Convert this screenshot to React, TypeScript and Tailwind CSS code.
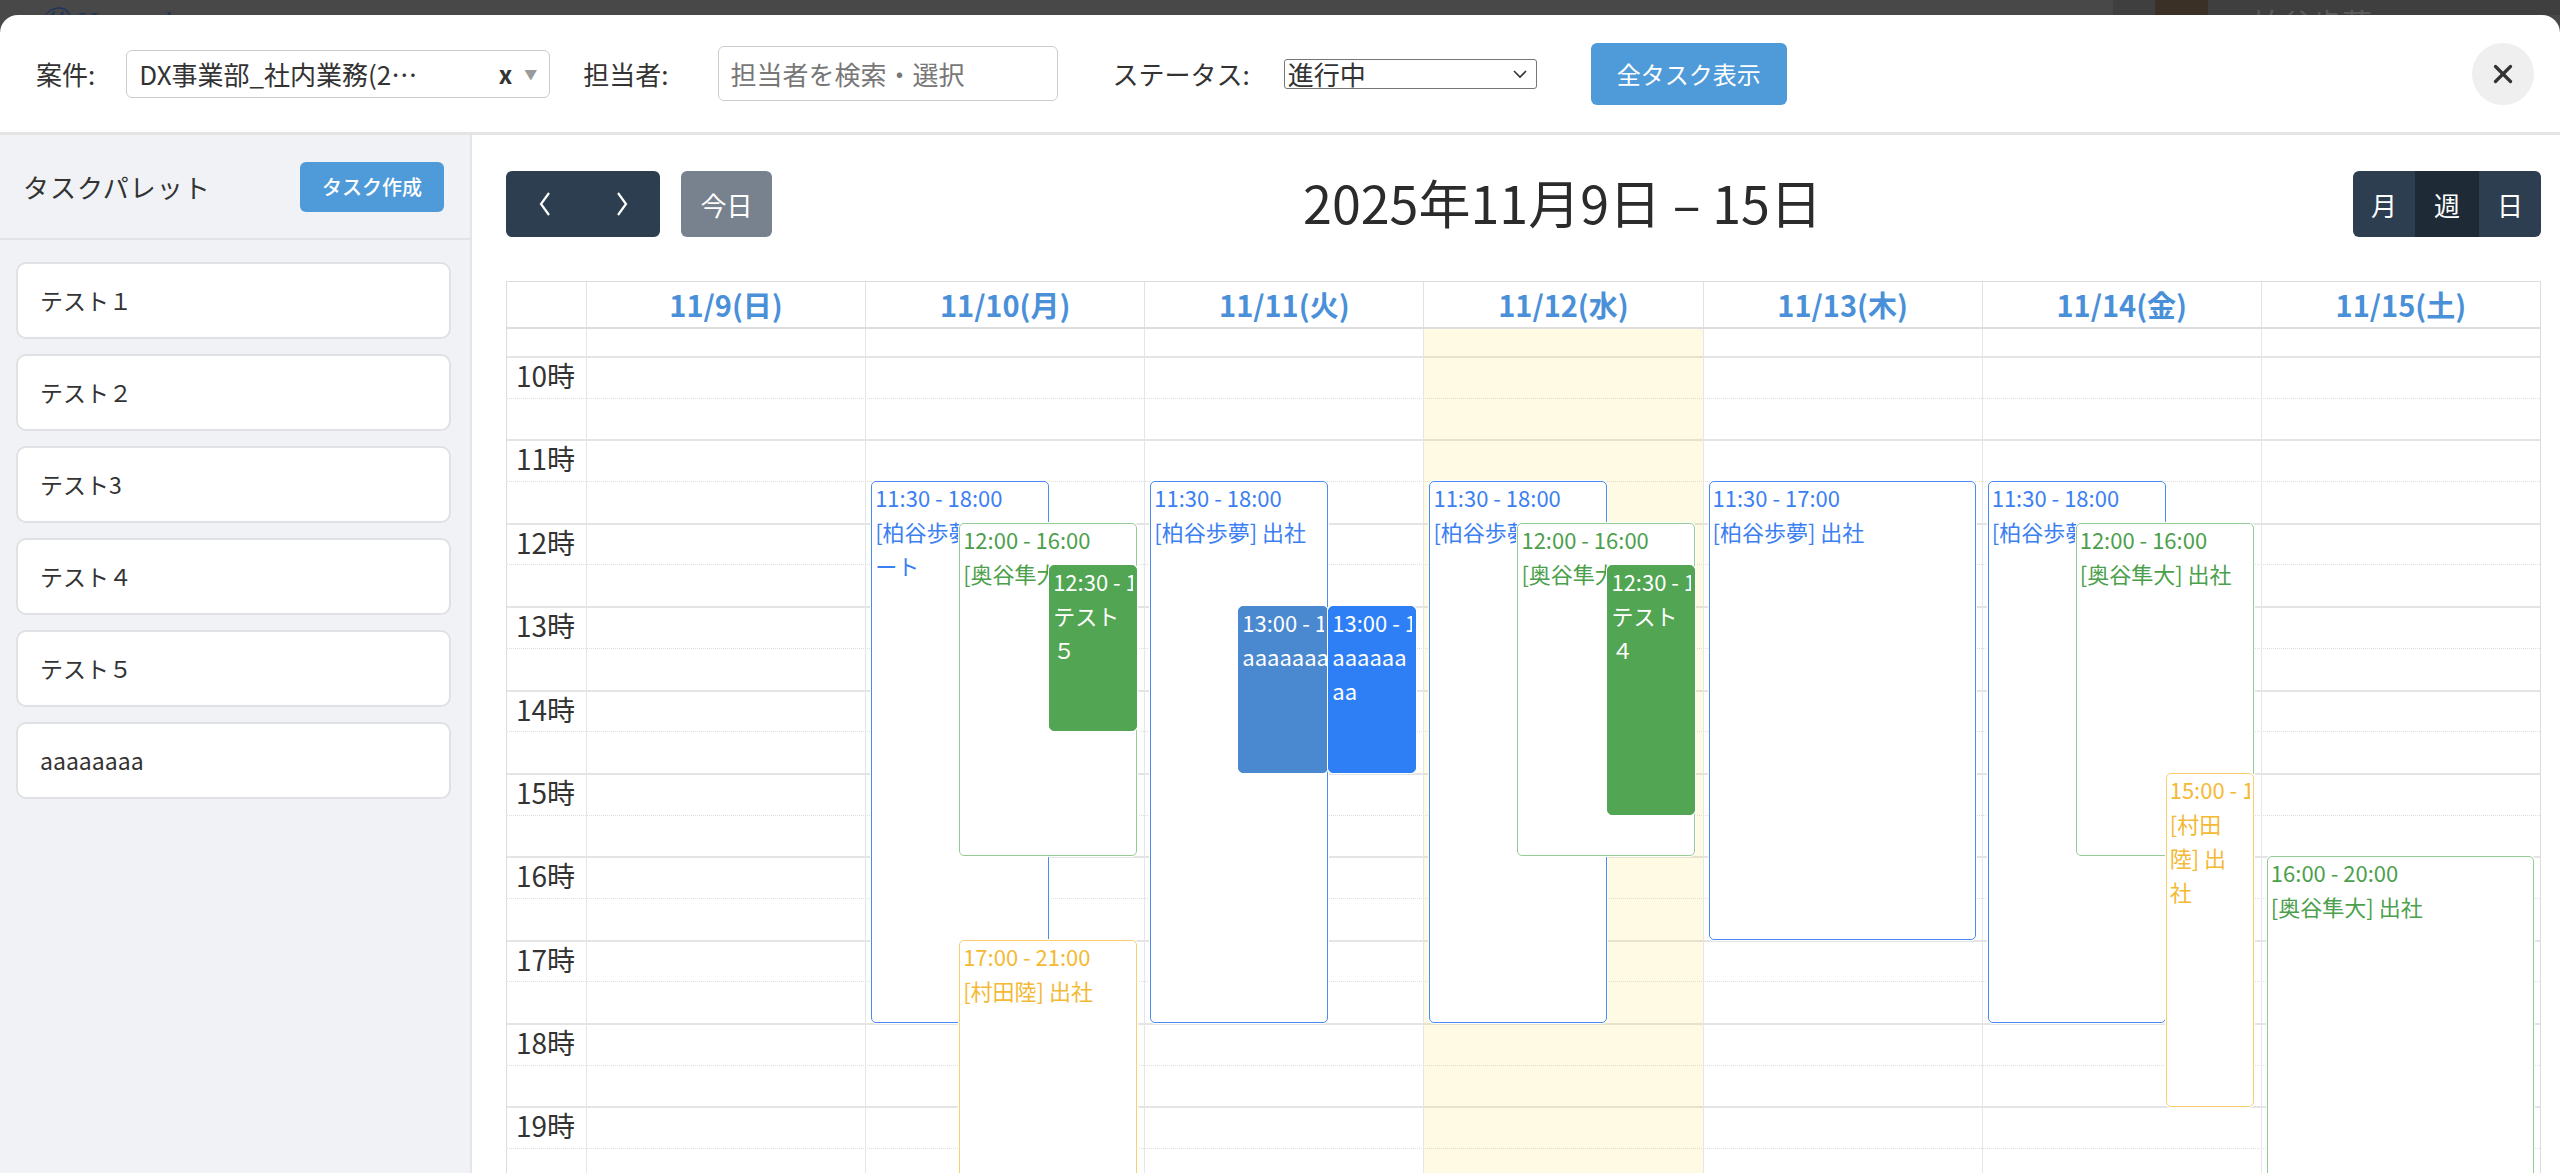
import React from "react";
import { X } from "lucide-react";

type Kind = "blueO" | "greenO" | "yellowO" | "greenF" | "blueF" | "blueL";

interface Ev {
  s: number;
  e: number;
  l: number;
  r: number;
  kind: Kind;
  time: string;
  title: string;
  nowrap?: boolean;
}

const HOUR = 83.4;
const TOP0 = 27; // 10:00 line offset inside the scrolled body
const y = (h: number) => TOP0 + (h - 10) * HOUR;

const days = ["11/9(日)", "11/10(月)", "11/11(火)", "11/12(水)", "11/13(木)", "11/14(金)", "11/15(土)"];
const hours = [10, 11, 12, 13, 14, 15, 16, 17, 18, 19, 20];
const palette = ["テスト１", "テスト２", "テスト3", "テスト４", "テスト５", "aaaaaaaa"];

const kindClass: Record<Kind, string> = {
  blueO: "bg-white border-[#4a8af4] text-[#3b7ff2]",
  greenO: "bg-white border-[#94cc94] text-[#4c9f4c]",
  yellowO: "bg-white border-[#f9d06e] text-[#f4b935]",
  greenF: "bg-[#52a552] border-[#52a552] text-white",
  blueF: "bg-[#2e7ff6] border-[#2e7ff6] text-white",
  blueL: "bg-[#4a88d0] border-[#4a88d0] text-white",
};

const events: Ev[][] = [
  [],
  [
    { s: 11.5, e: 18, l: 5, r: 183, kind: "blueO", time: "11:30 - 18:00", title: "[柏谷歩夢] リモート" },
    { s: 12, e: 16, l: 93, r: 271, kind: "greenO", time: "12:00 - 16:00", title: "[奥谷隼大] 出社" },
    { s: 12.5, e: 14.5, l: 183, r: 271, kind: "greenF", time: "12:30 - 14:30", title: "テスト５" },
    { s: 17, e: 21, l: 93, r: 271, kind: "yellowO", time: "17:00 - 21:00", title: "[村田陸] 出社" },
  ],
  [
    { s: 11.5, e: 18, l: 5, r: 183, kind: "blueO", time: "11:30 - 18:00", title: "[柏谷歩夢] 出社" },
    { s: 13, e: 15, l: 93, r: 183, kind: "blueL", time: "13:00 - 15:00", title: "aaaaaaaa", nowrap: true },
    { s: 13, e: 15, l: 183, r: 271, kind: "blueF", time: "13:00 - 15:00", title: "aaaaaaaa" },
  ],
  [
    { s: 11.5, e: 18, l: 5, r: 183, kind: "blueO", time: "11:30 - 18:00", title: "[柏谷歩夢] 出社" },
    { s: 12, e: 16, l: 93, r: 271, kind: "greenO", time: "12:00 - 16:00", title: "[奥谷隼大] 出社" },
    { s: 12.5, e: 15.5, l: 183, r: 271, kind: "greenF", time: "12:30 - 15:30", title: "テスト４" },
  ],
  [{ s: 11.5, e: 17, l: 5, r: 272, kind: "blueO", time: "11:30 - 17:00", title: "[柏谷歩夢] 出社" }],
  [
    { s: 11.5, e: 18, l: 5, r: 183, kind: "blueO", time: "11:30 - 18:00", title: "[柏谷歩夢] 出社" },
    { s: 12, e: 16, l: 93, r: 271, kind: "greenO", time: "12:00 - 16:00", title: "[奥谷隼大] 出社" },
    { s: 15, e: 19, l: 183, r: 271, kind: "yellowO", time: "15:00 - 19:00", title: "[村田陸] 出社" },
  ],
  [{ s: 16, e: 20, l: 5, r: 272, kind: "greenO", time: "16:00 - 20:00", title: "[奥谷隼大] 出社" }],
];

function Chevron({ dir }: { dir: "l" | "r" }) {
  return (
    <svg width="16" height="26" viewBox="0 0 16 26" fill="none" stroke="white" strokeWidth="2.2">
      {dir === "l" ? <polyline points="12,2 4,13 12,24" /> : <polyline points="4,2 12,13 4,24" />}
    </svg>
  );
}

function EventBox({ ev }: { ev: Ev }) {
  return (
    <div
      className={`absolute overflow-hidden rounded-[5px] border-[1.5px] shadow-[0_0_0_1px_#fff] px-[3px] ${kindClass[ev.kind]}`}
      style={{ top: y(ev.s), height: y(ev.e) - y(ev.s), left: ev.l, width: ev.r - ev.l }}
    >
      <div className="whitespace-nowrap overflow-hidden text-[22px] leading-[33px] -mt-[1px]">{ev.time}</div>
      <div className={`pr-[4px] text-[22px] leading-[34px] ${ev.nowrap ? "whitespace-nowrap" : "break-words"}`}>
        {ev.title}
      </div>
    </div>
  );
}

export default function App() {
  return (
    <div className="w-[2560px] h-[1173px] overflow-hidden bg-[#484848] flex flex-col font-['Noto_Sans_CJK_JP','Noto_Sans',sans-serif] text-[#333]">
      {/* backdrop strip */}
      <div className="h-[15px] shrink-0 flex items-start overflow-hidden">
        <div className="ml-[38px] text-[30px] leading-[44px] text-[#22365a] font-['Liberation_Serif',serif] italic">
          ⑪ Hatenabase
        </div>
        <div className="ml-auto w-[447px] h-[15px] bg-[#3f3f3f] flex items-start pl-[42px]">
          <div className="w-[53px] h-[15px] bg-[#3a3026]" />
          <div className="ml-[44px] text-[30px] leading-[44px] text-[#5a5a5a]">柏谷歩夢</div>
        </div>
      </div>

      <div className="flex-1 min-h-0 bg-white rounded-t-[18px] flex flex-col overflow-hidden">
        {/* filter header */}
        <div className="h-[120px] shrink-0 flex items-center border-b-[3px] border-[#e4e4e4] text-[26px]">
          <div className="ml-[36px] flex items-center">
            <span>案件:</span>
            <div className="ml-[31px] w-[424px] h-[48px] border-[1.5px] border-[#cccccc] rounded-[6px] flex items-center pl-[12px] pr-[12px]">
              <span className="flex-1 whitespace-nowrap overflow-hidden">DX事業部_社内業務(2…</span>
              <span className="text-[24px] font-bold text-[#333] mr-[12px]">x</span>
              <span className="text-[13px] text-[#9a9a9a]">▼</span>
            </div>
          </div>
          <div className="ml-[33px] flex items-center">
            <span>担当者:</span>
            <div className="ml-[50px] w-[340px] h-[55px] border-[1.5px] border-[#cccccc] rounded-[6px] flex items-center pl-[11px] text-[#777]">
              担当者を検索・選択
            </div>
          </div>
          <div className="ml-[54px] flex items-center">
            <span>ステータス:</span>
            <div className="ml-[34px] w-[253px] h-[30px] border-[1.5px] border-[#767676] rounded-[3px] flex items-center justify-between pl-[3px] pr-[8px] leading-none">
              <span>進行中</span>
              <svg width="16" height="10" viewBox="0 0 16 10" fill="none" stroke="#333" strokeWidth="1.6">
                <polyline points="2,2 8,8 14,2" />
              </svg>
            </div>
          </div>
          <button className="ml-[54px] w-[196px] h-[62px] bg-[#4f9bd9] rounded-[6px] text-white text-[24px]">
            全タスク表示
          </button>
          <button className="ml-auto mr-[26px] w-[62px] h-[62px] rounded-full bg-[#efefef] flex items-center justify-center">
            <X size={30} strokeWidth={2.6} color="#333" />
          </button>
        </div>

        <div className="flex-1 min-h-0 flex">
          {/* task palette */}
          <div className="w-[472px] shrink-0 bg-[#f0f2f5] border-r-2 border-[#e3e5e9] flex flex-col">
            <div className="h-[105px] shrink-0 flex items-center justify-between pl-[23px] pr-[26px] border-b-2 border-[#e0e3e7]">
              <span className="text-[26px] tracking-[1px]">タスクパレット</span>
              <button className="w-[144px] h-[50px] bg-[#4f9bd9] rounded-[6px] text-white text-[20px] font-medium">
                タスク作成
              </button>
            </div>
            <div className="pt-[22px] pl-[16px] pr-[19px] flex flex-col gap-[15px]">
              {palette.map((p) => (
                <div
                  key={p}
                  className="h-[77px] bg-white border-2 border-[#dfe1e5] rounded-[10px] flex items-center pl-[22px] text-[23px]"
                >
                  {p}
                </div>
              ))}
            </div>
          </div>

          {/* calendar */}
          <div className="flex-1 min-w-0 flex flex-col pl-[34px] pr-[19px] pt-[36px]">
            <div className="h-[66px] shrink-0 flex items-center justify-between">
              <div className="flex items-center">
                <div className="flex h-[66px] rounded-[6px] overflow-hidden bg-[#2c3e50]">
                  <button className="w-[77px] flex items-center justify-center">
                    <Chevron dir="l" />
                  </button>
                  <button className="w-[77px] flex items-center justify-center">
                    <Chevron dir="r" />
                  </button>
                </div>
                <button className="ml-[21px] w-[91px] h-[66px] rounded-[6px] bg-[#78828e] text-white text-[26px]">
                  今日
                </button>
              </div>
              <div className="text-[52px] leading-none text-[#2b2b2b] -mt-[4px]">2025年11月9日 – 15日</div>
              <div className="flex h-[66px] rounded-[6px] overflow-hidden bg-[#2c3e50] text-white text-[26px]">
                <button className="w-[62px]">月</button>
                <button className="w-[64px] bg-[#1e2a36]">週</button>
                <button className="w-[62px]">日</button>
              </div>
            </div>

            <div className="mt-[44px] flex-1 min-h-0 flex flex-col border-l border-t border-r border-[#dddddd]">
              <div className="h-[47px] shrink-0 grid grid-cols-[79px_repeat(7,minmax(0,1fr))] border-b-2 border-[#dddddd]">
                <div />
                {days.map((d) => (
                  <div
                    key={d}
                    className="border-l border-[#e2e2e2] flex items-center justify-center text-[29px] font-bold text-[#4a90d9]"
                  >
                    {d}
                  </div>
                ))}
              </div>

              <div className="flex-1 min-h-0 relative overflow-hidden">
                {/* slot lines */}
                <div className="h-[27px]" />
                {hours.map((h) => (
                  <div key={h}>
                    <div className="h-[41.7px] border-t-2 border-[#e4e4e4] flex">
                      <div className="w-[79px] shrink-0 pl-[9px] -mt-[2px] text-[28px] leading-[38px]">{h}時</div>
                    </div>
                    <div className="h-[41.7px] border-t border-dotted border-[#dedede] flex">
                      <div className="w-[79px] shrink-0" />
                    </div>
                  </div>
                ))}

                {/* day columns with events */}
                <div className="absolute top-0 bottom-0 left-[79px] right-0 grid grid-cols-7">
                  {events.map((col, i) => (
                    <div
                      key={i}
                      className={`relative border-l border-[#e6e6e6] ${i === 3 ? "bg-[rgba(255,220,40,0.13)]" : ""}`}
                    >
                      {col.map((ev, j) => (
                        <EventBox key={j} ev={ev} />
                      ))}
                    </div>
                  ))}
                </div>
              </div>
            </div>
          </div>
        </div>
      </div>
    </div>
  );
}
